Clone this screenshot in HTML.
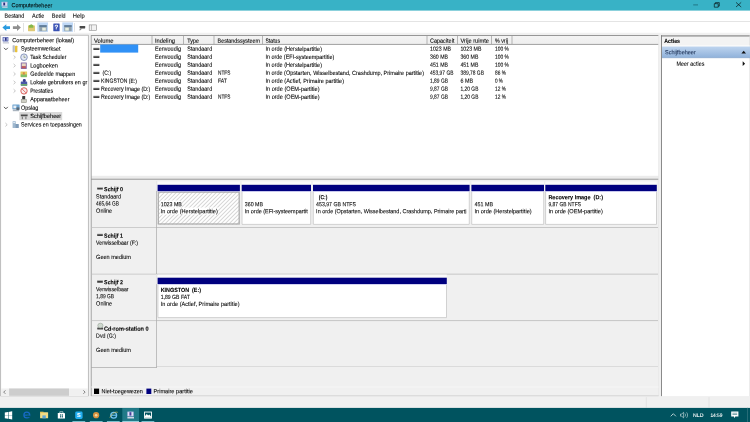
<!DOCTYPE html>
<html lang="nl"><head><meta charset="utf-8"><title>Computerbeheer</title>
<style>
html,body{margin:0;padding:0}
body{width:750px;height:422px;overflow:hidden;position:relative;background:#f0f0f0;font-family:"Liberation Sans",sans-serif;font-size:6.0px;line-height:8px;color:#000}
svg{position:absolute;left:0;top:0;display:block}
.t{position:absolute;left:0;top:0;white-space:nowrap;transform-origin:0 0}
.c{position:absolute;height:8px;overflow:hidden}
#tx{position:absolute;left:0;top:0;width:750px;height:422px;will-change:transform;opacity:.999;text-rendering:geometricPrecision;-webkit-text-stroke:.09px currentColor}
</style></head><body>
<svg width="750" height="422" viewBox="0 0 750 422">
<rect x="0.00" y="0.00" width="750.00" height="10.75" fill="#38b2c6"/>
<rect x="1.40" y="1.80" width="6.20" height="4.60" fill="#a9b4e0" rx="0.5"/>
<rect x="2.00" y="2.40" width="5.00" height="3.20" fill="#d3daf2"/>
<rect x="2.20" y="6.60" width="5.40" height="1.20" fill="#c8d4e4"/>
<rect x="3.30" y="2.60" width="1.80" height="2.80" fill="#2a2f7a"/>
<path d="M693.2 4.9h4.8" fill="none" stroke="#0b3c46" stroke-width="0.5"/>
<path d="M714.3 3.7h3.9v3.5h-3.9z" fill="none" stroke="#000" stroke-width="0.6"/>
<path d="M715.4 3.7v-1.1h3.9v3.5h-1.1" fill="none" stroke="#000" stroke-width="0.6"/>
<path d="M736 2.4l5.2 4.6M741.2 2.4l-5.2 4.6" fill="none" stroke="#000" stroke-width="0.6"/>
<rect x="0.00" y="10.75" width="750.00" height="10.60" fill="#fff"/>
<rect x="0.00" y="21.20" width="750.00" height="0.60" fill="#cfcfcf"/>
<rect x="0.00" y="21.80" width="750.00" height="11.10" fill="#fff"/>
<rect x="0.00" y="32.80" width="750.00" height="0.40" fill="#f6f6f6"/>
<path d="M2.4 27.6l3.9-3.3v2h3.7v2.7H6.3v2z" fill="#2a9be0"/>
<path d="M20.9 27.6l-3.9-3.3v2h-4.1v2.7H17v2z" fill="#8f8f8f"/>
<rect x="23.45" y="23.00" width="0.50" height="8.80" fill="#c4c4c4"/>
<rect x="28.00" y="25.40" width="7.00" height="5.80" fill="#dfc974" rx="0.4"/>
<path d="M28.8 25.6l2.6-1.4 2 1.4v2.2h-4.6z" fill="#86b84a"/>
<rect x="37.30" y="22.40" width="10.70" height="9.40" fill="#bfd8f6"/>
<rect x="39.30" y="25.20" width="7.40" height="6.00" fill="#8fa0ad"/>
<rect x="39.30" y="25.20" width="7.40" height="1.70" fill="#5d7a99"/>
<rect x="42.20" y="27.60" width="3.60" height="3.00" fill="#e8efe0"/>
<rect x="53.30" y="23.40" width="6.30" height="7.90" fill="#3a52b4" rx="0.5"/>
<rect x="62.30" y="22.40" width="10.70" height="9.40" fill="#bfd8f6"/>
<rect x="64.30" y="25.20" width="7.40" height="6.00" fill="#8fa0ad"/>
<rect x="64.30" y="25.20" width="7.40" height="1.70" fill="#5d7a99"/>
<rect x="65.20" y="27.60" width="3.60" height="3.00" fill="#e8efe0"/>
<rect x="74.15" y="23.00" width="0.50" height="8.80" fill="#c4c4c4"/>
<rect x="79.60" y="26.00" width="5.60" height="2.40" fill="#4a4a4a" rx="0.4"/>
<path d="M78.8 30.2l2-2h1.6l-2 2z" fill="#8a8a8a"/>
<rect x="89.20" y="24.90" width="7.40" height="5.40" fill="#f2f2f2" stroke="#8a8a8a" stroke-width="0.6"/>
<rect x="91.35" y="25.00" width="0.50" height="5.20" fill="#8a8a8a"/>
<rect x="0.70" y="35.20" width="87.60" height="361.00" fill="#fff" stroke="#a6a6a6" stroke-width="0.7"/>
<rect x="19.30" y="112.00" width="42.90" height="8.20" fill="#d9d9d9"/>
<rect x="2.60" y="36.90" width="5.80" height="4.60" fill="#5361ad" rx="0.4"/>
<rect x="3.40" y="37.60" width="4.20" height="3.00" fill="#c3cdf0"/>
<rect x="5.00" y="37.70" width="1.60" height="3.00" fill="#2d2f80"/>
<rect x="2.80" y="41.90" width="6.20" height="1.70" fill="#cfd2dc"/>
<rect x="12.60" y="45.35" width="2.20" height="6.80" fill="#b9bdc4" rx="0.4"/>
<rect x="15.00" y="45.75" width="2.40" height="6.40" fill="#e9c23a" rx="0.6"/>
<path d="M4.00 47.85l1.9 1.9 1.9-1.9" fill="none" stroke="#333" stroke-width="0.85"/>
<circle cx="24.00" cy="57.20" r="3.3" fill="#e3e8f4" stroke="#7f8fb8" stroke-width="0.9"/>
<path d="M24.00 55.40v2h1.6" fill="none" stroke="#5a6a3a" stroke-width="0.5"/>
<path d="M13.60 55.50l1.8 1.7-1.8 1.7" fill="none" stroke="#a6a6a6" stroke-width="0.65"/>
<rect x="20.80" y="62.40" width="6.00" height="6.60" fill="#8a6ea8" rx="0.4"/>
<rect x="21.80" y="63.40" width="4.00" height="3.00" fill="#e8d8c0"/>
<rect x="21.80" y="66.20" width="4.00" height="2.00" fill="#c45a5a"/>
<path d="M13.60 63.90l1.8 1.7-1.8 1.7" fill="none" stroke="#a6a6a6" stroke-width="0.65"/>
<rect x="20.50" y="71.40" width="6.60" height="5.60" fill="#e4cd62" rx="0.4"/>
<rect x="20.80" y="74.40" width="6.00" height="2.80" fill="#7fbf6a"/>
<rect x="22.80" y="72.20" width="2.00" height="2.40" fill="#d88a4a"/>
<path d="M13.60 72.30l1.8 1.7-1.8 1.7" fill="none" stroke="#a6a6a6" stroke-width="0.65"/>
<rect x="20.80" y="81.45" width="6.40" height="4.20" fill="#4a57a8" rx="0.6"/>
<rect x="22.80" y="79.05" width="3.00" height="3.00" fill="#3a3f90" rx="1.2"/>
<rect x="20.80" y="84.05" width="6.40" height="1.60" fill="#6fae6a"/>
<path d="M13.60 80.75l1.8 1.7-1.8 1.7" fill="none" stroke="#a6a6a6" stroke-width="0.65"/>
<circle cx="24.00" cy="90.90" r="3.2" fill="#f6ecec" stroke="#d9534f" stroke-width="0.9"/>
<path d="M22.00 88.90l4 4" fill="none" stroke="#d9534f" stroke-width="0.8"/>
<path d="M13.60 89.20l1.8 1.7-1.8 1.7" fill="none" stroke="#a6a6a6" stroke-width="0.65"/>
<rect x="22.20" y="96.00" width="3.00" height="3.40" fill="#3c3c3c" rx="0.4"/>
<rect x="21.20" y="99.50" width="5.40" height="3.20" fill="#cfcfc4" stroke="#8a8a80" stroke-width="0.5"/>
<rect x="12.40" y="104.60" width="7.20" height="4.60" fill="#6fa3cf" rx="0.5"/>
<rect x="13.40" y="105.60" width="3.00" height="2.60" fill="#e8f0f8"/>
<rect x="12.80" y="109.40" width="6.40" height="1.80" fill="#a9b4bf"/>
<rect x="16.40" y="107.40" width="3.00" height="2.60" fill="#5a6a78"/>
<path d="M4.00 106.90l1.9 1.9 1.9-1.9" fill="none" stroke="#333" stroke-width="0.85"/>
<rect x="20.80" y="114.20" width="6.80" height="2.00" fill="#4a4a4a" rx="0.3"/>
<rect x="20.80" y="113.60" width="6.80" height="0.80" fill="#c8c8c8"/>
<rect x="21.80" y="116.60" width="1.00" height="2.60" fill="#6a6a6a"/>
<rect x="25.40" y="116.60" width="1.00" height="2.60" fill="#6a6a6a"/>
<rect x="12.60" y="121.30" width="3.20" height="6.80" fill="#9fb8cf" rx="0.3"/>
<rect x="15.40" y="124.10" width="3.40" height="4.00" fill="#7f9bb8" rx="0.3"/>
<rect x="13.20" y="122.10" width="2.00" height="1.00" fill="#e8f0f8"/>
<path d="M5.40 123.00l1.8 1.7-1.8 1.7" fill="none" stroke="#a6a6a6" stroke-width="0.65"/>
<rect x="1.10" y="388.50" width="86.80" height="7.30" fill="#f0f0f0"/>
<rect x="9.10" y="388.50" width="59.90" height="7.30" fill="#cdcdcd"/>
<path d="M5.4 390.4l-1.7 1.7 1.7 1.7" fill="none" stroke="#505050" stroke-width="0.7"/>
<path d="M83.4 390.4l1.7 1.7-1.7 1.7" fill="none" stroke="#505050" stroke-width="0.7"/>
<rect x="91.00" y="35.20" width="567.60" height="361.00" fill="#f0f0f0"/>
<rect x="91.00" y="35.20" width="567.60" height="140.80" fill="#fff"/>
<rect x="91.00" y="175.80" width="567.60" height="3.20" fill="#ebebeb"/>
<defs><linearGradient id="hg" x1="0" y1="0" x2="0" y2="1"><stop offset="0" stop-color="#f4f4f4"/><stop offset="1" stop-color="#eeeeee"/></linearGradient><linearGradient id="sg" x1="0" y1="0" x2="0" y2="1"><stop offset="0" stop-color="#bfd5ef"/><stop offset="1" stop-color="#8fb1da"/></linearGradient><pattern id="ht" width="2.83" height="2.83" patternUnits="userSpaceOnUse" patternTransform="rotate(-45)"><rect width="2.83" height="2.83" fill="#fff"/><rect y="0" width="2.83" height="0.65" fill="#c4c4c4"/></pattern></defs>
<rect x="91.00" y="35.60" width="567.60" height="8.60" fill="url(#hg)"/>
<rect x="91.00" y="35.20" width="567.60" height="0.80" fill="#7f7f7f"/>
<rect x="91.00" y="43.95" width="567.60" height="0.70" fill="#7c7c7c"/>
<rect x="151.65" y="36.00" width="0.70" height="8.00" fill="#9a9a9a"/>
<rect x="183.05" y="36.00" width="0.70" height="8.00" fill="#9a9a9a"/>
<rect x="213.65" y="36.00" width="0.70" height="8.00" fill="#9a9a9a"/>
<rect x="262.05" y="36.00" width="0.70" height="8.00" fill="#9a9a9a"/>
<rect x="426.65" y="36.00" width="0.70" height="8.00" fill="#9a9a9a"/>
<rect x="457.05" y="36.00" width="0.70" height="8.00" fill="#9a9a9a"/>
<rect x="491.05" y="36.00" width="0.70" height="8.00" fill="#9a9a9a"/>
<rect x="511.65" y="36.00" width="0.70" height="8.00" fill="#9a9a9a"/>
<rect x="100.20" y="44.50" width="38.00" height="8.10" fill="#3091f6"/>
<rect x="93.40" y="48.00" width="6.00" height="2.10" fill="#3f3f3f" rx="0.3"/>
<rect x="93.40" y="47.60" width="6.00" height="0.70" fill="#bdbdbd"/>
<rect x="93.40" y="56.00" width="6.00" height="2.10" fill="#3f3f3f" rx="0.3"/>
<rect x="93.40" y="55.60" width="6.00" height="0.70" fill="#bdbdbd"/>
<rect x="93.40" y="64.00" width="6.00" height="2.10" fill="#3f3f3f" rx="0.3"/>
<rect x="93.40" y="63.60" width="6.00" height="0.70" fill="#bdbdbd"/>
<rect x="93.40" y="72.00" width="6.00" height="2.10" fill="#3f3f3f" rx="0.3"/>
<rect x="93.40" y="71.60" width="6.00" height="0.70" fill="#bdbdbd"/>
<rect x="93.40" y="80.00" width="6.00" height="2.10" fill="#3f3f3f" rx="0.3"/>
<rect x="93.40" y="79.60" width="6.00" height="0.70" fill="#bdbdbd"/>
<rect x="93.40" y="88.00" width="6.00" height="2.10" fill="#3f3f3f" rx="0.3"/>
<rect x="93.40" y="87.60" width="6.00" height="0.70" fill="#bdbdbd"/>
<rect x="93.40" y="96.00" width="6.00" height="2.10" fill="#3f3f3f" rx="0.3"/>
<rect x="93.40" y="95.60" width="6.00" height="0.70" fill="#bdbdbd"/>
<rect x="91.00" y="178.75" width="567.60" height="0.90" fill="#8f8f8f"/>
<rect x="90.80" y="35.20" width="0.80" height="361.00" fill="#969696"/>
<rect x="658.10" y="35.20" width="0.60" height="361.00" fill="#e6e6e6"/>
<rect x="91.00" y="227.15" width="65.80" height="0.70" fill="#bcbcbc"/>
<rect x="156.50" y="227.15" width="501.50" height="0.70" fill="#b4b4b4"/>
<rect x="156.15" y="190.90" width="0.70" height="36.60" fill="#a8a8a8"/>
<rect x="156.15" y="180.90" width="0.70" height="10.00" fill="#e4e4e4"/>
<rect x="97.20" y="187.40" width="5.60" height="2.10" fill="#3f3f3f" rx="0.3"/>
<rect x="97.20" y="187.00" width="5.60" height="0.70" fill="#bdbdbd"/>
<rect x="157.60" y="181.40" width="82.30" height="43.30" fill="#fbfbfb"/>
<rect x="157.60" y="191.10" width="82.30" height="33.60" fill="url(#ht)"/>
<rect x="158.30" y="192.10" width="80.90" height="31.90" fill="none" stroke="#adadad" stroke-width="1.3"/>
<rect x="160.60" y="200.50" width="19.60" height="7.00" fill="#fff"/>
<rect x="160.60" y="207.50" width="57.60" height="7.00" fill="#fff"/>
<rect x="157.60" y="184.80" width="82.30" height="6.30" fill="#00007f"/>
<rect x="157.60" y="191.20" width="82.30" height="0.60" fill="#b4b4ea"/>
<rect x="241.70" y="181.40" width="69.30" height="43.30" fill="#fbfbfb"/>
<rect x="241.70" y="191.10" width="69.30" height="33.60" fill="#fff"/>
<path d="M242.00 191.50V224.40H310.70V191.50" fill="none" stroke="#bdbdbd" stroke-width="0.7"/>
<rect x="241.70" y="184.80" width="69.30" height="6.30" fill="#00007f"/>
<rect x="241.70" y="191.20" width="69.30" height="0.60" fill="#b4b4ea"/>
<rect x="313.00" y="181.40" width="156.60" height="43.30" fill="#fbfbfb"/>
<rect x="313.00" y="191.10" width="156.60" height="33.60" fill="#fff"/>
<path d="M313.30 191.50V224.40H469.30V191.50" fill="none" stroke="#bdbdbd" stroke-width="0.7"/>
<rect x="313.00" y="184.80" width="156.60" height="6.30" fill="#00007f"/>
<rect x="313.00" y="191.20" width="156.60" height="0.60" fill="#b4b4ea"/>
<rect x="471.40" y="181.40" width="72.60" height="43.30" fill="#fbfbfb"/>
<rect x="471.40" y="191.10" width="72.60" height="33.60" fill="#fff"/>
<path d="M471.70 191.50V224.40H543.70V191.50" fill="none" stroke="#bdbdbd" stroke-width="0.7"/>
<rect x="471.40" y="184.80" width="72.60" height="6.30" fill="#00007f"/>
<rect x="471.40" y="191.20" width="72.60" height="0.60" fill="#b4b4ea"/>
<rect x="545.30" y="181.40" width="111.50" height="43.30" fill="#fbfbfb"/>
<rect x="545.30" y="191.10" width="111.50" height="33.60" fill="#fff"/>
<path d="M545.60 191.50V224.40H656.50V191.50" fill="none" stroke="#bdbdbd" stroke-width="0.7"/>
<rect x="545.30" y="184.80" width="111.50" height="6.30" fill="#00007f"/>
<rect x="545.30" y="191.20" width="111.50" height="0.60" fill="#b4b4ea"/>
<rect x="91.00" y="273.75" width="65.80" height="0.70" fill="#bcbcbc"/>
<rect x="156.50" y="273.75" width="501.50" height="0.70" fill="#b4b4b4"/>
<rect x="156.15" y="227.50" width="0.70" height="46.60" fill="#a8a8a8"/>
<rect x="97.20" y="234.00" width="5.60" height="2.10" fill="#3f3f3f" rx="0.3"/>
<rect x="97.20" y="233.60" width="5.60" height="0.70" fill="#bdbdbd"/>
<rect x="91.00" y="320.35" width="65.80" height="0.70" fill="#bcbcbc"/>
<rect x="156.50" y="320.35" width="501.50" height="0.70" fill="#b4b4b4"/>
<rect x="156.15" y="284.10" width="0.70" height="36.60" fill="#a8a8a8"/>
<rect x="156.15" y="274.10" width="0.70" height="10.00" fill="#e4e4e4"/>
<rect x="97.20" y="280.60" width="5.60" height="2.10" fill="#3f3f3f" rx="0.3"/>
<rect x="97.20" y="280.20" width="5.60" height="0.70" fill="#bdbdbd"/>
<rect x="157.60" y="274.60" width="289.20" height="43.30" fill="#fbfbfb"/>
<rect x="157.60" y="284.30" width="289.20" height="33.60" fill="#fff"/>
<path d="M157.90 284.70V317.60H446.50V284.70" fill="none" stroke="#bdbdbd" stroke-width="0.7"/>
<rect x="157.60" y="277.70" width="289.20" height="6.30" fill="#00007f"/>
<rect x="157.60" y="284.10" width="289.20" height="0.60" fill="#b4b4ea"/>
<rect x="91.00" y="367.25" width="65.80" height="0.70" fill="#a6a6a6"/>
<rect x="156.50" y="366.15" width="501.50" height="0.70" fill="#d2d2d2"/>
<rect x="156.15" y="320.70" width="0.70" height="47.10" fill="#a8a8a8"/>
<rect x="97.20" y="327.60" width="6.00" height="1.80" fill="#4a4a4a" rx="0.3"/>
<ellipse cx="100.4" cy="325.60" rx="2.6" ry="2.4" fill="#cfd8cf" stroke="#8a968a" stroke-width="0.5"/>
<rect x="91.00" y="386.65" width="567.60" height="0.70" fill="#fafafa"/>
<rect x="94.00" y="388.60" width="5.10" height="5.40" fill="#000"/>
<rect x="146.40" y="388.60" width="4.90" height="5.40" fill="#00007f"/>
<rect x="91.00" y="395.70" width="567.60" height="0.60" fill="#b0b0b0"/>
<rect x="661.30" y="35.20" width="88.70" height="361.00" fill="#fff"/>
<rect x="661.30" y="36.40" width="88.70" height="9.20" fill="#f3f3f3"/>
<rect x="661.30" y="35.25" width="88.70" height="1.30" fill="#8c8c8c"/>
<rect x="661.20" y="35.20" width="0.80" height="361.10" fill="#6e6e6e"/>
<rect x="749.45" y="35.20" width="0.50" height="361.10" fill="#d8d8d8"/>
<rect x="662.00" y="46.30" width="88.00" height="11.60" fill="url(#sg)"/>
<rect x="662.00" y="45.50" width="88.00" height="0.80" fill="#fafafa"/>
<rect x="662.00" y="57.65" width="88.00" height="0.50" fill="#8ea6c8"/>
<path d="M741.4 53.5l2.3-2.7 2.3 2.7z" fill="#111"/>
<path d="M742.7 61.3l2.4 2.4-2.4 2.4z" fill="#111"/>
<rect x="0.00" y="396.40" width="750.00" height="11.30" fill="#f0f0f0"/>
<rect x="645.90" y="397.20" width="0.60" height="10.40" fill="#dadada"/>
<rect x="708.70" y="397.20" width="0.60" height="10.40" fill="#dadada"/>
<rect x="0.00" y="407.90" width="750.00" height="14.40" fill="#00535f"/>
<rect x="122.30" y="408.05" width="16.70" height="14.40" fill="#217a88"/>
<rect x="72.40" y="421.15" width="12.80" height="0.90" fill="#8fd3e0"/>
<rect x="89.80" y="421.15" width="12.80" height="0.90" fill="#8fd3e0"/>
<rect x="106.90" y="421.15" width="12.80" height="0.90" fill="#8fd3e0"/>
<rect x="141.50" y="421.15" width="12.80" height="0.90" fill="#8fd3e0"/>
<rect x="122.30" y="421.15" width="16.70" height="0.90" fill="#a8e0ea"/>
<path d="M4.8 412.4l3.2-.45v3.2H4.8zM8.5 411.9l3.7-.55v3.8H8.5zM4.8 415.6h3.2v3.2l-3.2-.45zM8.5 415.6h3.7v3.8l-3.7-.55z" fill="#fff"/>
<circle cx="26.8" cy="415" r="2.9" fill="none" stroke="#176bc6" stroke-width="1.3"/>
<rect x="24.00" y="414.60" width="5.40" height="1.10" fill="#176bc6"/>
<rect x="27.20" y="415.60" width="3.00" height="1.60" fill="#00535f"/>
<rect x="40.10" y="412.30" width="8.00" height="6.00" fill="#f3dc84" rx="0.4"/>
<rect x="40.10" y="411.70" width="3.40" height="1.40" fill="#e6c65a"/>
<rect x="42.40" y="415.40" width="3.40" height="2.90" fill="#5fa8d8"/>
<rect x="57.80" y="413.00" width="7.20" height="5.60" fill="#fff" rx="0.4"/>
<path d="M59.8 413v-1.2h3.2v1.2" fill="none" stroke="#fff" stroke-width="0.6"/>
<rect x="60.00" y="414.40" width="1.20" height="1.20" fill="#00535f"/>
<rect x="61.80" y="414.40" width="1.20" height="1.20" fill="#00535f"/>
<rect x="60.00" y="416.20" width="1.20" height="1.20" fill="#00535f"/>
<rect x="61.80" y="416.20" width="1.20" height="1.20" fill="#00535f"/>
<rect x="75.20" y="411.60" width="7.40" height="7.40" fill="#22aef0" rx="1.4"/>
<circle cx="96.1" cy="415.2" r="3.1" fill="#d9923f"/>
<circle cx="96.1" cy="415.2" r="1.3" fill="#f4d9a0"/>
<circle cx="113.7" cy="415.2" r="2.9" fill="none" stroke="#6fc0f0" stroke-width="1.3"/>
<rect x="111.00" y="414.70" width="5.60" height="1.10" fill="#6fc0f0"/>
<path d="M109.8 417.6c2-4 5.6-6.4 8-5.2" fill="none" stroke="#e8c44a" stroke-width="0.6"/>
<rect x="127.20" y="411.40" width="6.60" height="5.20" fill="#a9b2e0" rx="0.6"/>
<rect x="128.00" y="412.20" width="5.00" height="3.60" fill="#dfe4f6"/>
<rect x="129.40" y="412.20" width="2.00" height="3.40" fill="#4a3f9c"/>
<rect x="127.40" y="417.00" width="6.60" height="1.50" fill="#cfd6e6"/>
<rect x="144.10" y="411.60" width="7.80" height="7.00" fill="#fff"/>
<rect x="145.00" y="412.50" width="6.00" height="5.20" fill="#00535f"/>
<path d="M145 417.7v-1.6l1.7-2.2 1.5 1.6 1.1-.9 1.7 1.9v1.2z" fill="#fff"/>
<path d="M670.7 416.3l2.6-2.6 2.6 2.6" fill="none" stroke="#fff" stroke-width="0.7"/>
<path d="M680.5 414h1.3l1.8-1.7v5.6l-1.8-1.7h-1.3z" fill="none" stroke="#fff" stroke-width="0.5"/>
<path d="M685 413.6c.7.9.7 2.1 0 3M686.6 412.4c1.3 1.7 1.3 3.7 0 5.4" fill="none" stroke="#fff" stroke-width="0.5"/>
<path d="M731.2 411.4h7.2v5h-3l-1.4 1.8v-1.8h-2.8z" fill="#fff"/>
<rect x="732.40" y="412.85" width="4.80" height="0.50" fill="#00535f"/>
<rect x="732.40" y="414.45" width="4.80" height="0.50" fill="#00535f"/>
<rect x="747.20" y="407.60" width="0.40" height="14.40" fill="#5f939c"/>
</svg>
<div id="tx">
<span class="t" style="transform:translate(11.60px,2.35px) skewY(.05deg) scaleX(0.9016)">Computerbeheer</span>
<span class="t" style="transform:translate(4.60px,12.85px) skewY(.05deg) scaleX(0.8896)">Bestand</span>
<span class="t" style="transform:translate(32.00px,12.85px) skewY(.05deg) scaleX(0.9143)">Actie</span>
<span class="t" style="transform:translate(51.80px,12.85px) skewY(.05deg) scaleX(0.8985)">Beeld</span>
<span class="t" style="transform:translate(72.80px,12.85px) skewY(.05deg) scaleX(0.9559)">Help</span>
<span class="t" style="font-size:6.4px;color:#fff;font-weight:bold;transform:translate(54.60px,24.25px) skewY(.05deg) scaleX(1.0000)">?</span>
<span class="t" style="transform:translate(12.30px,37.15px) skewY(.05deg) scaleX(0.9296)">Computerbeheer (lokaal)</span>
<span class="t" style="transform:translate(21.00px,45.60px) skewY(.05deg) scaleX(0.8951)">Systeemwerkset</span>
<span class="t" style="transform:translate(30.20px,54.05px) skewY(.05deg) scaleX(0.8823)">Task Scheduler</span>
<span class="t" style="transform:translate(30.20px,62.45px) skewY(.05deg) scaleX(0.9359)">Logboeken</span>
<span class="t" style="transform:translate(30.20px,70.85px) skewY(.05deg) scaleX(0.9114)">Gedeelde mappen</span>
<div class="c" style="left:30px;top:79px;width:57.80px"><span class="t" style="transform:translate(0.20px,0.30px) skewY(.05deg) scaleX(0.9100)">Lokale gebruikers en gr</span></div>
<span class="t" style="transform:translate(30.20px,87.75px) skewY(.05deg) scaleX(0.8543)">Prestaties</span>
<span class="t" style="transform:translate(30.20px,96.15px) skewY(.05deg) scaleX(0.9130)">Apparaatbeheer</span>
<span class="t" style="transform:translate(21.00px,104.65px) skewY(.05deg) scaleX(0.9098)">Opslag</span>
<span class="t" style="transform:translate(30.20px,113.05px) skewY(.05deg) scaleX(0.9293)">Schijfbeheer</span>
<span class="t" style="transform:translate(21.00px,121.55px) skewY(.05deg) scaleX(0.8848)">Services en toepassingen</span>
<span class="t" style="transform:translate(94.00px,37.65px) skewY(.05deg) scaleX(0.9792)">Volume</span>
<span class="t" style="transform:translate(155.00px,37.65px) skewY(.05deg) scaleX(0.9510)">Indeling</span>
<span class="t" style="transform:translate(187.30px,37.65px) skewY(.05deg) scaleX(0.8989)">Type</span>
<span class="t" style="transform:translate(217.60px,37.65px) skewY(.05deg) scaleX(0.8953)">Bestandssysteem</span>
<span class="t" style="transform:translate(265.40px,37.65px) skewY(.05deg) scaleX(0.8580)">Status</span>
<span class="t" style="transform:translate(430.00px,37.65px) skewY(.05deg) scaleX(0.9143)">Capaciteit</span>
<span class="t" style="transform:translate(460.40px,37.65px) skewY(.05deg) scaleX(0.9494)">Vrije ruimte</span>
<span class="t" style="transform:translate(495.00px,37.65px) skewY(.05deg) scaleX(0.8860)">% vrij</span>
<span class="t" style="transform:translate(155.00px,45.85px) skewY(.05deg) scaleX(0.9168)">Eenvoudig</span>
<span class="t" style="transform:translate(187.20px,45.85px) skewY(.05deg) scaleX(0.9024)">Standaard</span>
<span class="t" style="transform:translate(265.40px,45.85px) skewY(.05deg) scaleX(0.9224)">In orde (Herstelpartitie)</span>
<span class="t" style="transform:translate(430.00px,45.85px) skewY(.05deg) scaleX(0.8744)">1023 MB</span>
<span class="t" style="transform:translate(460.40px,45.85px) skewY(.05deg) scaleX(0.8744)">1023 MB</span>
<span class="t" style="transform:translate(495.00px,45.85px) skewY(.05deg) scaleX(0.8228)">100 %</span>
<span class="t" style="transform:translate(155.00px,53.85px) skewY(.05deg) scaleX(0.9168)">Eenvoudig</span>
<span class="t" style="transform:translate(187.20px,53.85px) skewY(.05deg) scaleX(0.9024)">Standaard</span>
<span class="t" style="transform:translate(265.40px,53.85px) skewY(.05deg) scaleX(0.9075)">In orde (EFI-systeempartitie)</span>
<span class="t" style="transform:translate(430.00px,53.85px) skewY(.05deg) scaleX(0.8701)">360 MB</span>
<span class="t" style="transform:translate(460.40px,53.85px) skewY(.05deg) scaleX(0.8701)">360 MB</span>
<span class="t" style="transform:translate(495.00px,53.85px) skewY(.05deg) scaleX(0.8228)">100 %</span>
<span class="t" style="transform:translate(155.00px,61.85px) skewY(.05deg) scaleX(0.9168)">Eenvoudig</span>
<span class="t" style="transform:translate(187.20px,61.85px) skewY(.05deg) scaleX(0.9024)">Standaard</span>
<span class="t" style="transform:translate(265.40px,61.85px) skewY(.05deg) scaleX(0.9224)">In orde (Herstelpartitie)</span>
<span class="t" style="transform:translate(430.00px,61.85px) skewY(.05deg) scaleX(0.8701)">451 MB</span>
<span class="t" style="transform:translate(460.40px,61.85px) skewY(.05deg) scaleX(0.8701)">451 MB</span>
<span class="t" style="transform:translate(495.00px,61.85px) skewY(.05deg) scaleX(0.8228)">100 %</span>
<span class="t" style="transform:translate(102.60px,69.85px) skewY(.05deg) scaleX(0.8600)">(C:)</span>
<span class="t" style="transform:translate(155.00px,69.85px) skewY(.05deg) scaleX(0.9168)">Eenvoudig</span>
<span class="t" style="transform:translate(187.20px,69.85px) skewY(.05deg) scaleX(0.9024)">Standaard</span>
<span class="t" style="transform:translate(218.00px,69.85px) skewY(.05deg) scaleX(0.7912)">NTFS</span>
<span class="t" style="transform:translate(265.40px,69.85px) skewY(.05deg) scaleX(0.9182)">In orde (Opstarten, Wisselbestand, Crashdump, Primaire partitie)</span>
<span class="t" style="transform:translate(430.00px,69.85px) skewY(.05deg) scaleX(0.8227)">453,97 GB</span>
<span class="t" style="transform:translate(460.40px,69.85px) skewY(.05deg) scaleX(0.8227)">389,78 GB</span>
<span class="t" style="transform:translate(495.00px,69.85px) skewY(.05deg) scaleX(0.8037)">86 %</span>
<span class="t" style="transform:translate(101.00px,77.85px) skewY(.05deg) scaleX(0.8458)">KINGSTON (E:)</span>
<span class="t" style="transform:translate(155.00px,77.85px) skewY(.05deg) scaleX(0.9168)">Eenvoudig</span>
<span class="t" style="transform:translate(187.20px,77.85px) skewY(.05deg) scaleX(0.9024)">Standaard</span>
<span class="t" style="transform:translate(218.00px,77.85px) skewY(.05deg) scaleX(0.8521)">FAT</span>
<span class="t" style="transform:translate(265.40px,77.85px) skewY(.05deg) scaleX(0.9279)">In orde (Actief, Primaire partitie)</span>
<span class="t" style="transform:translate(430.00px,77.85px) skewY(.05deg) scaleX(0.8176)">1,89 GB</span>
<span class="t" style="transform:translate(460.40px,77.85px) skewY(.05deg) scaleX(0.8990)">6 MB</span>
<span class="t" style="transform:translate(495.00px,77.85px) skewY(.05deg) scaleX(0.7734)">0 %</span>
<span class="t" style="transform:translate(101.00px,85.85px) skewY(.05deg) scaleX(0.8924)">Recovery Image (D:)</span>
<span class="t" style="transform:translate(155.00px,85.85px) skewY(.05deg) scaleX(0.9168)">Eenvoudig</span>
<span class="t" style="transform:translate(187.20px,85.85px) skewY(.05deg) scaleX(0.9024)">Standaard</span>
<span class="t" style="transform:translate(265.40px,85.85px) skewY(.05deg) scaleX(0.9340)">In orde (OEM-partitie)</span>
<span class="t" style="transform:translate(430.00px,85.85px) skewY(.05deg) scaleX(0.8176)">9,87 GB</span>
<span class="t" style="transform:translate(460.40px,85.85px) skewY(.05deg) scaleX(0.8176)">1,20 GB</span>
<span class="t" style="transform:translate(495.00px,85.85px) skewY(.05deg) scaleX(0.8037)">12 %</span>
<span class="t" style="transform:translate(101.00px,93.85px) skewY(.05deg) scaleX(0.8924)">Recovery Image (D:)</span>
<span class="t" style="transform:translate(155.00px,93.85px) skewY(.05deg) scaleX(0.9168)">Eenvoudig</span>
<span class="t" style="transform:translate(187.20px,93.85px) skewY(.05deg) scaleX(0.9024)">Standaard</span>
<span class="t" style="transform:translate(218.00px,93.85px) skewY(.05deg) scaleX(0.7912)">NTFS</span>
<span class="t" style="transform:translate(265.40px,93.85px) skewY(.05deg) scaleX(0.9340)">In orde (OEM-partitie)</span>
<span class="t" style="transform:translate(430.00px,93.85px) skewY(.05deg) scaleX(0.8176)">9,87 GB</span>
<span class="t" style="transform:translate(460.40px,93.85px) skewY(.05deg) scaleX(0.8176)">1,20 GB</span>
<span class="t" style="transform:translate(495.00px,93.85px) skewY(.05deg) scaleX(0.8037)">12 %</span>
<span class="t" style="font-weight:bold;transform:translate(104.10px,186.35px) skewY(.05deg) scaleX(0.8855)">Schijf 0</span>
<span class="t" style="transform:translate(96.10px,193.45px) skewY(.05deg) scaleX(0.8988)">Standaard</span>
<span class="t" style="transform:translate(96.10px,200.55px) skewY(.05deg) scaleX(0.7983)">465,64 GB</span>
<span class="t" style="transform:translate(96.10px,207.65px) skewY(.05deg) scaleX(0.9168)">Online</span>
<span class="t" style="transform:translate(160.70px,201.25px) skewY(.05deg) scaleX(0.8828)">1023 MB</span>
<span class="t" style="transform:translate(160.70px,208.25px) skewY(.05deg) scaleX(0.9306)">In orde (Herstelpartitie)</span>
<span class="t" style="transform:translate(244.80px,201.25px) skewY(.05deg) scaleX(0.8798)">360 MB</span>
<div class="c" style="left:244px;top:208px;width:64.40px"><span class="t" style="transform:translate(0.80px,0.25px) skewY(.05deg) scaleX(0.9075)">In orde (EFI-systeempartit</span></div>
<span class="t" style="font-weight:bold;transform:translate(316.10px,194.25px) skewY(.05deg) scaleX(0.8265)">&nbsp;&nbsp;(C:)</span>
<span class="t" style="transform:translate(316.10px,201.25px) skewY(.05deg) scaleX(0.8668)">453,97 GB NTFS</span>
<div class="c" style="left:316px;top:208px;width:151.00px"><span class="t" style="transform:translate(0.10px,0.25px) skewY(.05deg) scaleX(0.9150)">In orde (Opstarten, Wisselbestand, Crashdump, Primaire parti</span></div>
<span class="t" style="transform:translate(474.50px,201.25px) skewY(.05deg) scaleX(0.8943)">451 MB</span>
<span class="t" style="transform:translate(474.50px,208.25px) skewY(.05deg) scaleX(0.9306)">In orde (Herstelpartitie)</span>
<span class="t" style="font-weight:bold;transform:translate(548.40px,194.25px) skewY(.05deg) scaleX(0.9148)">Recovery Image&nbsp; (D:)</span>
<span class="t" style="transform:translate(548.40px,201.25px) skewY(.05deg) scaleX(0.8283)">9,87 GB NTFS</span>
<span class="t" style="transform:translate(548.40px,208.25px) skewY(.05deg) scaleX(0.9374)">In orde (OEM-partitie)</span>
<span class="t" style="font-weight:bold;transform:translate(104.10px,232.70px) skewY(.05deg) scaleX(0.8855)">Schijf 1</span>
<span class="t" style="transform:translate(96.10px,239.80px) skewY(.05deg) scaleX(0.8664)">Verwisselbaar (F:)</span>
<span class="t" style="transform:translate(96.10px,254.00px) skewY(.05deg) scaleX(0.9260)">Geen medium</span>
<span class="t" style="font-weight:bold;transform:translate(104.10px,279.15px) skewY(.05deg) scaleX(0.8855)">Schijf 2</span>
<span class="t" style="transform:translate(96.10px,286.25px) skewY(.05deg) scaleX(0.8699)">Verwisselbaar</span>
<span class="t" style="transform:translate(96.10px,293.35px) skewY(.05deg) scaleX(0.8131)">1,89 GB</span>
<span class="t" style="transform:translate(96.10px,300.45px) skewY(.05deg) scaleX(0.9168)">Online</span>
<span class="t" style="font-weight:bold;transform:translate(160.70px,287.05px) skewY(.05deg) scaleX(0.8977)">KINGSTON&nbsp; (E:)</span>
<span class="t" style="transform:translate(160.70px,294.05px) skewY(.05deg) scaleX(0.8555)">1,89 GB FAT</span>
<span class="t" style="transform:translate(160.70px,301.05px) skewY(.05deg) scaleX(0.9315)">In orde (Actief, Primaire partitie)</span>
<span class="t" style="font-weight:bold;transform:translate(104.10px,325.75px) skewY(.05deg) scaleX(0.9271)">Cd-rom-station 0</span>
<span class="t" style="transform:translate(96.10px,332.85px) skewY(.05deg) scaleX(0.8777)">Dvd (G:)</span>
<span class="t" style="transform:translate(96.10px,347.05px) skewY(.05deg) scaleX(0.9260)">Geen medium</span>
<span class="t" style="transform:translate(101.50px,388.15px) skewY(.05deg) scaleX(0.9171)">Niet-toegewezen</span>
<span class="t" style="transform:translate(153.50px,388.15px) skewY(.05deg) scaleX(0.9401)">Primaire partitie</span>
<span class="t" style="font-weight:bold;transform:translate(664.30px,37.95px) skewY(.05deg) scaleX(0.8715)">Acties</span>
<span class="t" style="color:#1e3257;transform:translate(665.00px,49.25px) skewY(.05deg) scaleX(0.9233)">Schijfbeheer</span>
<span class="t" style="transform:translate(676.60px,60.65px) skewY(.05deg) scaleX(0.8963)">Meer acties</span>
<span class="t" style="font-size:5.6px;color:#fff;font-weight:bold;transform:translate(77.00px,412.05px) skewY(.05deg) scaleX(1.0000)">S</span>
<span class="t" style="font-size:5.2px;color:#fff;transform:translate(693.00px,411.95px) skewY(.05deg) scaleX(1.0009)">NLD</span>
<span class="t" style="font-size:5.2px;color:#fff;transform:translate(710.40px,411.95px) skewY(.05deg) scaleX(0.9242)">14:59</span>
</div>
</body></html>
